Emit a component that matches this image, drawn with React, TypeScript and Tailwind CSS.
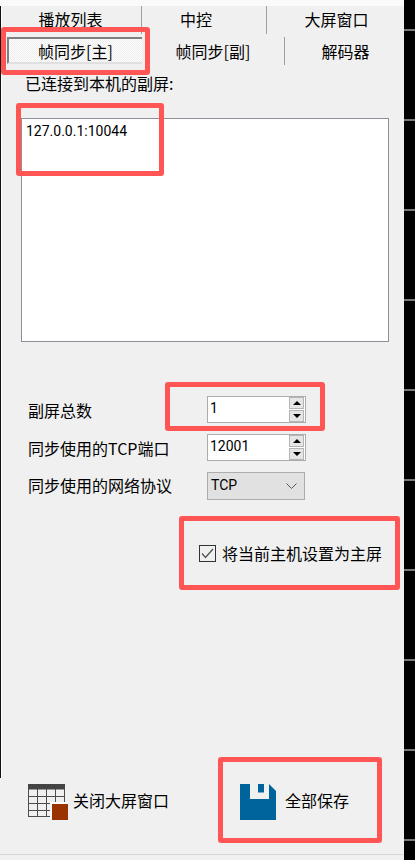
const cjk = "font-['Noto_Sans_CJK_SC','Noto_Sans',sans-serif]";

function Spin({ value }: { value: string }) {
  return (
    <div className="flex h-[27px] w-[99px] items-center border border-[#adadad] bg-white pr-[1px]">
      <span className="flex-1 pb-[2px] pl-[2px] font-['Roboto',sans-serif] text-[14px] leading-[23px] text-black">{value}</span>
      <div className="flex h-[25px] w-[15px] flex-col justify-between">
        <div className="flex h-[12px] items-center justify-center border border-[#b4b4b4] bg-[#e6e6e6]">
          <div className="h-0 w-0 border-x-[4px] border-b-[4px] border-x-transparent border-b-black" />
        </div>
        <div className="flex h-[12px] items-center justify-center border border-[#b4b4b4] bg-[#e6e6e6]">
          <div className="h-0 w-0 border-x-[4px] border-t-[4px] border-x-transparent border-t-black" />
        </div>
      </div>
    </div>
  );
}

function TableIcon() {
  return (
    <svg width="40" height="36" viewBox="0 0 40 36" className="shrink-0">
      <rect x="0" y="0" width="37" height="5.5" fill="#444444" />
      <path
        d="M.5 5v28M9.5 5v28M18.5 5v28M27.5 5v28M36.5 5v28M0 12.5h37M0 19.5h37M0 26.5h37M0 32.5h37"
        fill="none"
        stroke="#4d4d4d"
        strokeWidth="1"
      />
      <rect x="22" y="18" width="18" height="18" fill="#fafafa" />
      <rect x="24" y="20" width="16" height="16" fill="#993300" />
    </svg>
  );
}

function SaveIcon() {
  return (
    <svg width="36" height="36" viewBox="0 0 36 36" className="shrink-0">
      <path d="M0 0h29l7 7v29H0z" fill="#00649c" />
      <path d="M10 0h19v15H10z" fill="#f0f0f0" />
      <path d="M18 0h6v8.5h-6z" fill="#00649c" />
    </svg>
  );
}

function Mark({ className }: { className: string }) {
  return <div className={`absolute rounded-[3px] border-[5px] border-[#ff5555] ${className}`} />;
}

export default function App() {
  return (
    <div className={`relative flex h-[860px] w-[415px] overflow-hidden bg-[#f0f0f0] text-[16px] text-black ${cjk}`}>
      <div className="flex w-[404px] flex-col">
        <div className="h-[6px] shrink-0 bg-[#fafafa]" />

        <div className="flex h-[28px] shrink-0 items-start leading-[26px]">
          <div className="h-[28px] w-[142px] border-r border-[#a0a0a0] text-center">播放列表</div>
          <div className="h-[28px] w-[125px] border-r border-[#a0a0a0] pr-[16px] text-center">中控</div>
          <div className="flex-1 pl-[2px] text-center">大屏窗口</div>
        </div>

        <div className="mt-[3px] flex h-[28px] shrink-0 items-start leading-[24px]">
          <div className="ml-[7px] h-[27px] w-[135px] border-t-2 border-b-2 border-l-2 border-t-[#808080] border-b-[#e0e0e0] border-l-[#808080] bg-[repeating-conic-gradient(#ffffff_0_25%,#ececec_0_50%)] bg-[length:2px_2px] text-center">
            帧同步[主]
          </div>
          <div className="h-[28px] w-[143px] border-r border-[#a0a0a0] pt-[2px] text-center">帧同步[副]</div>
          <div className="flex-1 pt-[2px] pl-[2px] text-center">解码器</div>
        </div>

        <div className="mt-[6px] ml-[25px] h-[24px] leading-[24px]">已连接到本机的副屏:</div>

        <div className="mt-[23px] ml-[21px] h-[224px] w-[368px] border border-[#8f8f9a] bg-white pt-[1px] pl-[4px] font-['Roboto',sans-serif] text-[14px] leading-[22px]">
          127.0.0.1:10044
        </div>

        <div className="mt-[54px] ml-[28px] flex flex-col">
          <div className="flex h-[27px] items-center">
            <span className="w-[179px] pt-[1px]">副屏总数</span>
            <Spin value="1" />
          </div>
          <div className="mt-[11px] flex h-[27px] items-center">
            <span className="w-[179px] pt-[1px]">同步使用的TCP端口</span>
            <Spin value="12001" />
          </div>
          <div className="mt-[11px] flex h-[28px] items-center">
            <span className="w-[179px] pb-[2px]">同步使用的网络协议</span>
            <div className="flex h-[28px] w-[98px] items-center justify-between border border-[#adadad] bg-[#e1e1e1] pr-[7px] pb-[1px] pl-[3px] font-['Roboto',sans-serif] text-[14px]">
              TCP
              <svg width="11" height="6" viewBox="0 0 11 6">
                <path d="M.5.5l5 5 5-5" fill="none" stroke="#555555" />
              </svg>
            </div>
          </div>
        </div>

        <div className="mt-[44px] ml-[199px] flex h-[18px] items-center">
          <div className="flex h-[17px] w-[17px] items-center justify-center border border-[#333333]">
            <svg width="13" height="11" viewBox="0 0 13 11">
              <path d="M1 5.5l3.5 4L12 1" fill="none" stroke="#555555" strokeWidth="1.4" />
            </svg>
          </div>
          <span className="ml-[6px]">将当前主机设置为主屏</span>
        </div>

        <div className="mt-[222px] flex h-[36px] items-center">
          <div className="ml-[28px] flex w-[212px] items-center">
            <TableIcon />
            <span className="ml-[5px] pb-[4px]">关闭大屏窗口</span>
          </div>
          <SaveIcon />
          <span className="ml-[9px] pb-[4px]">全部保存</span>
        </div>

        <div className="mt-[34px] h-[1px] bg-[#d9d9d9]" />
      </div>

      <div className="flex w-[11px] flex-col bg-black pt-[29px]">
        {[0, 1, 2, 3, 4, 5, 6, 7, 8, 9].map((i) => (
          <div key={i} className="mb-[88px] h-[2px] shrink-0 bg-[#777777]" />
        ))}
      </div>

      {/* edge of the window behind */}
      <div className="absolute top-[6px] left-0 h-[773px] w-[2px] border-r border-b border-r-white border-b-white bg-[#111111]" />

      <Mark className="top-[27px] left-[1px] h-[48px] w-[149px]" />
      <Mark className="top-[103px] left-[16px] h-[73px] w-[148px]" />
      <Mark className="top-[382px] left-[165px] h-[49px] w-[160px]" />
      <Mark className="top-[516px] left-[179px] h-[74px] w-[221px]" />
      <Mark className="top-[757px] left-[218px] h-[86px] w-[164px]" />
    </div>
  );
}
